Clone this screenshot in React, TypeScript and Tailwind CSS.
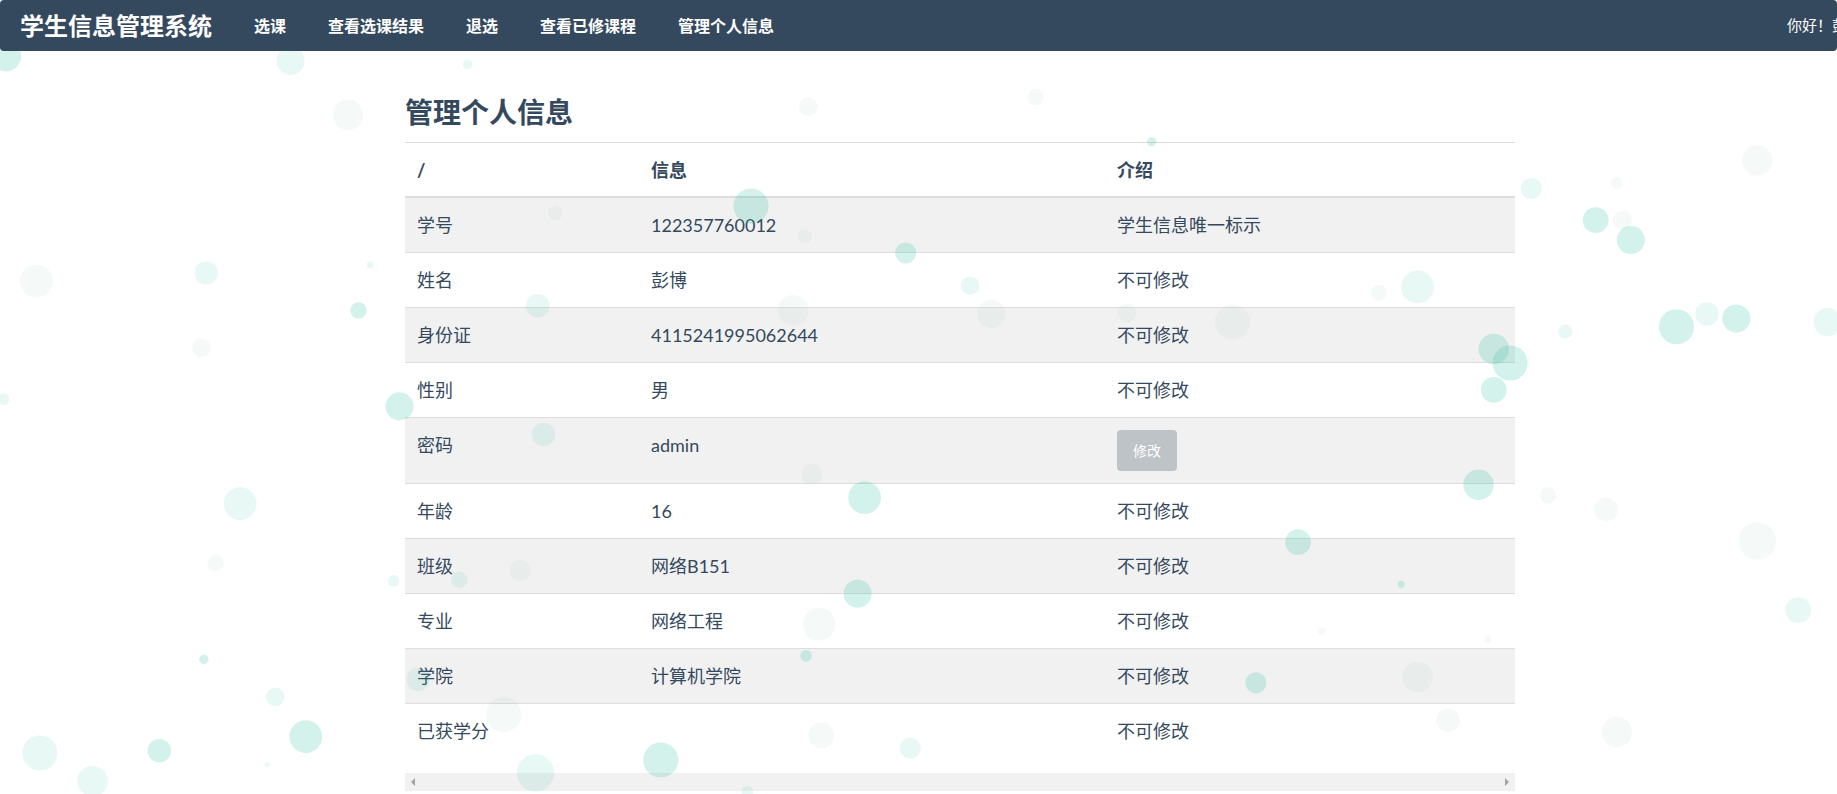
const rows: { label: string; value: string; note: string; button?: boolean }[] = [
  { label: '学号', value: '122357760012', note: '学生信息唯一标示' },
  { label: '姓名', value: '彭博', note: '不可修改' },
  { label: '身份证', value: '4115241995062644', note: '不可修改' },
  { label: '性别', value: '男', note: '不可修改' },
  { label: '密码', value: 'admin', note: '', button: true },
  { label: '年龄', value: '16', note: '不可修改' },
  { label: '班级', value: '网络B151', note: '不可修改' },
  { label: '专业', value: '网络工程', note: '不可修改' },
  { label: '学院', value: '计算机学院', note: '不可修改' },
  { label: '已获学分', value: '', note: '不可修改' },
];

const navItems = ['选课', '查看选课结果', '退选', '查看已修课程', '管理个人信息'];

// bubbles: x, y, r (in 1568x678 space), strength
const bubbles: [number, number, number, number][] = [
  [5, 48, 13, 3], [248, 52, 12, 2], [297, 98, 13, 1], [399, 55, 4, 2], [690, 91, 8, 1],
  [884, 83, 7, 1], [983, 121, 4, 3], [1500, 137, 13, 1], [1307, 161, 9, 2], [1380, 156, 5, 1],
  [1362, 188, 11, 3], [1385, 188, 8, 1], [1392, 205, 12, 3], [641, 176, 15, 3], [474, 182, 6, 1],
  [687, 202, 6, 1], [773, 216, 9, 3], [31, 240, 14, 1], [176, 233, 10, 2], [306, 265, 7, 3],
  [316, 226, 3, 2], [459, 261, 10, 2], [677, 265, 13, 1], [828, 244, 8, 2], [846, 268, 12, 1],
  [962, 267, 8, 1], [1052, 275, 15, 1], [1177, 250, 7, 1], [1210, 245, 14, 2], [1431, 279, 15, 3],
  [1457, 268, 10, 2], [1482, 272, 12, 3], [1560, 275, 12, 2], [1336, 283, 6, 2], [1275, 298, 13, 3],
  [1289, 310, 15, 3], [1275, 333, 11, 3], [172, 297, 8, 1], [341, 347, 12, 3], [3, 341, 5, 2],
  [464, 371, 10, 2], [693, 405, 9, 1], [738, 425, 14, 3], [1262, 414, 13, 3], [1321, 423, 7, 1],
  [1371, 435, 10, 1], [1500, 462, 16, 1], [205, 430, 14, 2], [392, 495, 7, 2], [336, 496, 5, 2],
  [444, 487, 9, 1], [732, 507, 12, 3], [1108, 463, 11, 3], [1196, 499, 3, 3], [1535, 521, 11, 2],
  [184, 481, 7, 1], [699, 533, 14, 1], [688, 560, 5, 3], [174, 563, 4, 3], [235, 595, 8, 2],
  [261, 629, 14, 3], [136, 641, 10, 3], [34, 643, 15, 2], [79, 667, 13, 2], [228, 653, 2, 2],
  [357, 580, 10, 2], [430, 610, 15, 1], [457, 660, 16, 2], [564, 649, 15, 3], [701, 628, 11, 1],
  [777, 639, 9, 2], [1072, 583, 9, 3], [1210, 578, 13, 1], [1236, 615, 10, 1], [1380, 625, 13, 1],
  [638, 676, 5, 2], [1128, 539, 3, 1], [1270, 546, 3, 1],
];

const bubbleFill = (s: number) =>
  s === 3 ? 'rgba(26,188,156,0.19)' : s === 2 ? 'rgba(26,188,156,0.1)' : 'rgba(120,170,160,0.07)';

const App = () => {
  return (
    <div
      className="relative w-[1837px] h-[794px] overflow-hidden bg-white text-[#34495e]"
      style={{ fontFamily: 'Lato, "Noto Sans CJK SC", sans-serif' }}
    >
      <svg
        className="absolute inset-0 z-10 pointer-events-none"
        width="1837"
        height="794"
        viewBox="0 0 1568 678"
        preserveAspectRatio="none"
      >
        {bubbles.map(([x, y, r, s], i) => (
          <circle key={i} cx={x} cy={y} r={r} fill={bubbleFill(s)} />
        ))}
      </svg>

      <nav className="relative z-20 h-[51px] bg-[#34495e] rounded-[4px] flex items-center pl-[20px] text-white">
        <span className="text-[24px] font-bold mr-[21px]">学生信息管理系统</span>
        {navItems.map((item) => (
          <span key={item} className="text-[16px] font-bold px-[21px]">
            {item}
          </span>
        ))}
        <span className="ml-auto mr-[-25px] text-[15px] whitespace-nowrap">你好！彭博</span>
      </nav>

      <div className="ml-[405px] w-[1110px]">
        <h1 className="mt-[43px] mb-[12px] text-[28px] leading-[36px] font-bold text-[#34495e]">管理个人信息</h1>

        <table className="w-full border-separate border-spacing-0 text-[18px]">
          <colgroup>
            <col className="w-[234px]" />
            <col className="w-[466px]" />
            <col />
          </colgroup>
          <thead>
            <tr>
              <th className="text-left font-bold px-[12px] pt-[12px] pb-[11px] leading-[30px] border-t border-b-2 border-[#dddddd]">/</th>
              <th className="text-left font-bold px-[12px] pt-[12px] pb-[11px] leading-[30px] border-t border-b-2 border-[#dddddd]">信息</th>
              <th className="text-left font-bold px-[12px] pt-[12px] pb-[11px] leading-[30px] border-t border-b-2 border-[#dddddd]">介绍</th>
            </tr>
          </thead>
          <tbody>
            {rows.map((row, i) => {
              const cell =
                'text-left align-top px-[12px] py-[12px] leading-[30px] ' +
                (i < rows.length - 1 ? 'border-b border-[#dddddd] ' : '') +
                (i % 2 === 0 ? 'bg-[#f1f1f1]' : 'bg-white');
              return (
                <tr key={row.label}>
                  <td className={cell}>{row.label}</td>
                  <td className={cell}>{row.value}</td>
                  <td className={cell}>
                    {row.button ? (
                      <button className="h-[41px] w-[60px] rounded-[4px] bg-[#bdc3c7] text-white text-[14px]">修改</button>
                    ) : (
                      row.note
                    )}
                  </td>
                </tr>
              );
            })}
          </tbody>
        </table>

        <div className="mt-[15px] h-[18px] bg-[#f1f1f1] flex items-center justify-between px-[6px]">
          <svg width="5" height="8" viewBox="0 0 5 8">
            <path d="M4 0 L0 4 L4 8 Z" fill="#a3a3a3" />
          </svg>
          <svg width="5" height="8" viewBox="0 0 5 8">
            <path d="M1 0 L5 4 L1 8 Z" fill="#a3a3a3" />
          </svg>
        </div>
      </div>
    </div>
  );
};

export default App;
